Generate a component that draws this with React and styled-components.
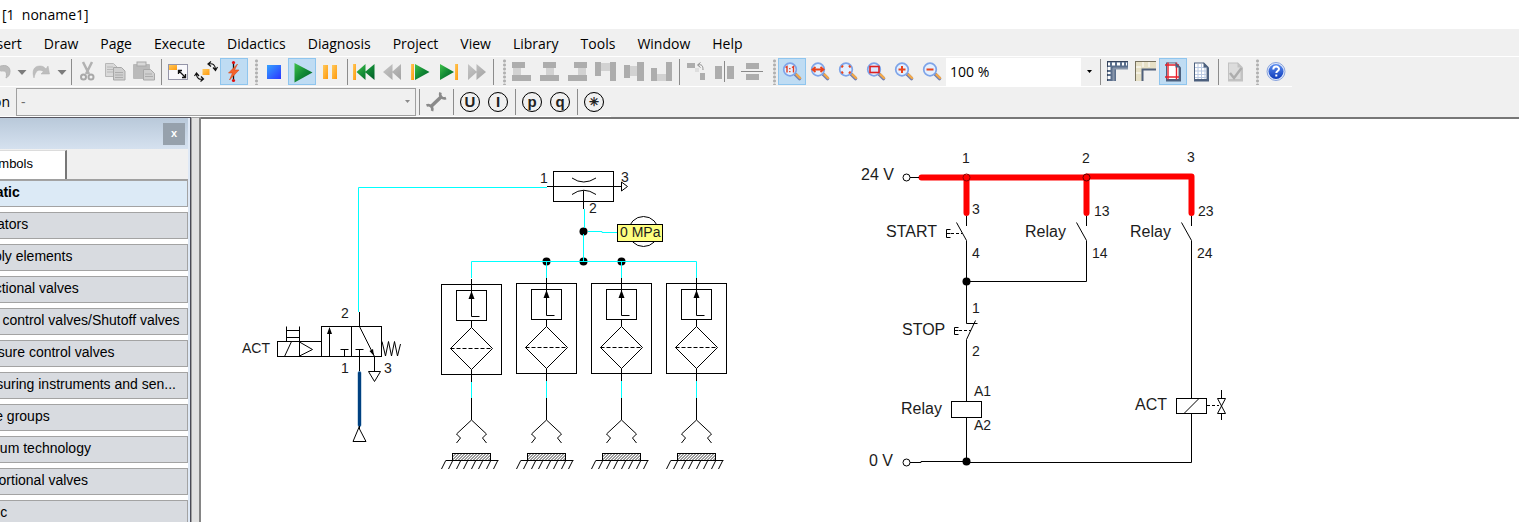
import React from "react";
import styled, { createGlobalStyle } from "styled-components";

const UI = '"Open Sans", "Noto Sans", sans-serif';
const SANS = '"Liberation Sans", Arial, sans-serif';

const GlobalStyle = createGlobalStyle`
  * { box-sizing: border-box; }
  body { margin: 0; background: #fff; font-family: ${UI}; font-size: 14px; color: #000; }
  button, select { font: inherit; color: inherit; }
`;

const Window = styled.div`
  display: flex;
  flex-direction: column;
  height: 100vh;
  overflow: hidden;
  background: #f0f0f0;
`;

const TitleBar = styled.header`
  flex: none;
  height: 29px;
  padding-left: 2px;
  line-height: 29px;
  background: #fff;
  white-space: pre;
`;

const MenuBar = styled.nav`
  flex: none;
  display: flex;
  gap: 22px;
  height: 28px;
  margin-left: -16px;
  border-bottom: 1px solid #fff;
`;

const MenuItem = styled.button`
  padding: 2px 0 0;
  border: 0;
  background: none;
  line-height: 26px;
  white-space: nowrap;
`;

const Toolbar = styled.div`
  flex: none;
  display: flex;
  align-items: center;
  align-self: flex-start;
  height: 30px;
  padding-right: 3px;
  border-bottom: 1px solid #fff;
`;

const ToolButton = styled.button`
  flex: none;
  display: grid;
  place-items: center;
  width: ${(p) => p.$w || 28}px;
  height: 27px;
  padding: 0;
  border: 0;
  overflow: hidden;
  background: ${(p) => (p.$on ? "#bfdcf3" : "none")};
  box-shadow: ${(p) => (p.$on ? "inset 0 0 0 1px #8fc5ee" : "none")};
`;

const Separator = styled.div`
  flex: none;
  width: 6px;
  height: 26px;
  border-left: 3px solid transparent;
  background: linear-gradient(#8c8c8c, #8c8c8c) 0 0 / 1px 100% no-repeat;
`;

const Grip = styled.div`
  flex: none;
  width: 12px;
  height: 26px;
  background: radial-gradient(circle, #b0b0b0 1px, transparent 2px) 7px 0 / 3px 4px repeat-y;
`;

const Combo = styled.div`
  position: relative;
  width: ${(p) => p.$w}px;
  height: ${(p) => p.$h}px;
  border: ${(p) => (p.$flat ? "1px solid #a0a0a0" : "0")};
  background: ${(p) => (p.$flat ? "#f0f0f0" : "#fff")};
`;

const ComboSelect = styled.select`
  width: 100%;
  height: 100%;
  padding: 0 20px 0 4px;
  border: 0;
  outline: 0;
  appearance: none;
  background: none;
  opacity: 1;
  color: ${(p) => (p.disabled ? "#6d6d6d" : "#000")};
`;

const ComboCaret = styled.span`
  position: absolute;
  top: 0;
  right: 0;
  display: grid;
  place-items: center;
  width: 16px;
  height: 100%;
  background: #f0f0f0;
  pointer-events: none;
`;

const FieldLabel = styled.label`
  display: flex;
  justify-content: flex-end;
  width: 16px;
  padding-right: 6px;
  overflow: hidden;
`;

const CircleLetter = styled.span`
  display: grid;
  place-items: center;
  width: 20px;
  height: 20px;
  border: 1px solid #000;
  border-radius: 50%;
  outline: 1px solid rgba(0, 0, 0, 0.1);
  outline-offset: -1px;
  color: #222;
  font: bold ${(p) => (p.$small ? 12 : 15)}px/16px ${SANS};
`;

const Workspace = styled.main`
  flex: 1;
  display: flex;
  min-height: 0;
`;

const Sidebar = styled.aside`
  flex: none;
  display: flex;
  flex-direction: column;
  width: 251px;
  margin-left: -60px;
  border-top: 1px solid #55555f;
  border-right: 1px solid #4a4a55;
  padding-right: 2px;
  background: #dfe9f6;
  font-family: ${SANS};
`;

const SidebarHead = styled.div`
  flex: none;
  display: flex;
  justify-content: flex-end;
  align-items: center;
  height: 31px;
  padding-right: 3px;
  background: linear-gradient(#b9c9da, #d5e1ef);
`;

const CloseButton = styled.button`
  width: 22px;
  height: 22px;
  padding: 0 0 2px;
  border: 0;
  background: #96a1ac;
  color: #fff;
  font: bold 11px/16px ${SANS};
`;

const Tabs = styled.div`
  flex: none;
  display: flex;
  height: 31px;
  padding-top: 1px;
  background: #f0f0f0;
  border-bottom: 1px solid #a0a0a0;
`;

const Tab = styled.button`
  width: 127px;
  padding: 0 32px 4px 0;
  border: 0;
  border-top: 1px solid #dcdcdc;
  border-right: 2px solid #777;
  background: #fff;
  text-align: right;
  font-size: 13px;
`;

const Groups = styled.div`
  flex: 1;
  display: flex;
  flex-direction: column;
  gap: 5px;
  min-height: 0;
  overflow: hidden;
  background: #fff;
`;

const Group = styled.button`
  flex: none;
  height: 27px;
  padding: 0 0 3px ${(p) => (p.$top ? 8 : 28)}px;
  border: 1px solid #a3a3a3;
  background: ${(p) => (p.$open ? "#dceaf6" : "#d8dbe0")};
  font-weight: ${(p) => (p.$open ? "bold" : "normal")};
  text-align: left;
  white-space: nowrap;
`;

const Splitter = styled.div`
  flex: none;
  width: 10px;
  border-top: 1px solid #a0a0a0;
  border-left: 1px solid #a0a0a0;
  border-right: 2px solid #858585;
  background: #e1e1e1;
`;

const Canvas = styled.section`
  flex: 1;
  min-width: 0;
  overflow: hidden;
  border-top: 2px solid #777;
  background: #fff;
`;

const Diagram = styled.svg`
  display: block;
  text { font-family: ${SANS}; font-size: 14px; fill: #1c1c1c; }
  text.name { font-size: 16px; }
  .w { fill: none; stroke: #000; stroke-width: 1; }
  .air { fill: none; stroke: #00ffff; stroke-width: 1; }
  .hot { fill: none; stroke: #ff0000; stroke-width: 6; stroke-linecap: round; stroke-linejoin: round; }
`;

/* ---------- toolbar icons, each drawn in a 28 x 27 cell ---------- */

const Icon = ({ children, w = 28, vb }) => (
  <svg width={w} height="27" viewBox={vb || `0 0 ${w} 27`} aria-hidden="true">
    {children}
  </svg>
);

const HiddenDefs = styled.svg`
  display: block;
`;

const Defs = () => (
  <HiddenDefs width="0" height="0" aria-hidden="true">
    <defs>
      <linearGradient id="green" x1="0" y1="0" x2="1" y2="1">
        <stop offset="0" stopColor="#3fc24a" />
        <stop offset="0.5" stopColor="#128a35" />
        <stop offset="1" stopColor="#005c28" />
      </linearGradient>
      <linearGradient id="blue" x1="0" y1="0" x2="1" y2="1">
        <stop offset="0" stopColor="#35a2ff" />
        <stop offset="1" stopColor="#2a35ff" />
      </linearGradient>
      <linearGradient id="amber" x1="0" y1="0" x2="1" y2="1">
        <stop offset="0" stopColor="#ffc95c" />
        <stop offset="1" stopColor="#ff9a0d" />
      </linearGradient>
      <linearGradient id="grey" x1="0" y1="0" x2="1" y2="1">
        <stop offset="0" stopColor="#c6c6c6" />
        <stop offset="1" stopColor="#a2a2a2" />
      </linearGradient>
      <linearGradient id="help" x1="0" y1="0" x2="0" y2="1">
        <stop offset="0" stopColor="#5c8df0" />
        <stop offset="1" stopColor="#0d3bbb" />
      </linearGradient>
      <pattern id="hatch" width="3" height="3" patternUnits="userSpaceOnUse">
        <path d="M-1 1L1 -1M0 3L3 0M2 4L4 2" stroke="#222" strokeWidth="0.9" />
      </pattern>
    </defs>
  </HiddenDefs>
);

const D = "#adadad";
const L = "#d2d2d2";
const Bars = ({ r }) => (
  <Icon>
    {r.map(([x, y, w, h, light], i) => (
      <rect key={i} x={x} y={y} width={w} height={h} fill={light ? L : D} />
    ))}
  </Icon>
);

const DropCaret = () => (
  <Icon w={12}>
    <path d="M1.500 12h9l-4.500 5z" fill="#7b7b7b" />
  </Icon>
);

const Lens = ({ children }) => (
  <Icon>
    <path d="M16 15l2.500 2.500" stroke="#6a7bb8" strokeWidth="3" />
    <path d="M17.500 16.500l4 4" stroke="#7580ae" strokeWidth="3.600" strokeLinecap="round" />
    <path d="M18.500 16.500l3.500 3.500" stroke="#f3a94a" strokeWidth="2.400" strokeLinecap="round" />
    <circle cx="12" cy="11.500" r="6.300" fill="#e4f0ff" stroke="#7ea4e8" strokeWidth="1.700" />
    {children}
  </Icon>
);

const Sheet = ({ fill, fold, children }) => (
  <Icon>
    <path d="M7 4.500h10l5 5v14h-15z" fill={fold} />
    <path d="M8 5.500h8.500l3 4v11.500h-11.500z" fill={fill} />
    {children}
    <path d="M16.500 4.500v5h5z" fill={fold} />
  </Icon>
);

const icons = {
  undo: (
    <Icon w={16} vb="0 0 16 27">
      <path d="M-3 11c3-5 13-5 13 2c0 4-2 6-4 7c1-4 1-8-5-7z" fill="#bcbcbc" stroke="#b4b4b4" />
    </Icon>
  ),
  redo: (
    <Icon>
      <path d="M6 20c-2-6-1-12 6-12c3 0 4 1 6 3l2-3l1.500 8h-8.500l2.500-2.500c-5-3-8-1-9.500 6.500z" fill="#bdbdbd" stroke="#b0b0b0" strokeWidth="0.500" />
    </Icon>
  ),
  cut: (
    <Icon>
      <path d="M9 4l6 12M18 4l-6 12" stroke="#b2b2b2" strokeWidth="2.500" fill="none" />
      <circle cx="9.500" cy="19" r="2.500" fill="none" stroke="#a8a8a8" strokeWidth="2" />
      <circle cx="17" cy="19" r="2.500" fill="none" stroke="#a8a8a8" strokeWidth="2" />
    </Icon>
  ),
  copy: (
    <Icon>
      <path d="M3.500 5.500h8l3.500 3.500v9.500h-11.500z" fill="#d9d9d9" stroke="#b8b8b8" />
      <path d="M5 9h6M5 11.500h6M5 14h6" stroke="#b8b8b8" />
      <path d="M11.500 9.500h8l3.500 3.500v9h-11.500z" fill="#cfcfcf" stroke="#a8a8a8" />
      <path d="M13 14.500h8M13 17h8M13 19.500h8" stroke="#acacac" />
    </Icon>
  ),
  paste: (
    <Icon>
      <rect x="3" y="6" width="17" height="15" rx="1" fill="#bababa" />
      <rect x="7" y="4" width="9" height="4" fill="#d8d8d8" stroke="#a8a8a8" />
      <path d="M13.500 11.500h7l4 4v6.500h-11z" fill="#cfcfcf" stroke="#a8a8a8" />
      <path d="M15 16h7M15 18.500h8" stroke="#acacac" />
    </Icon>
  ),
  fit: (
    <Icon>
      <rect x="4.500" y="6.500" width="19" height="15" fill="#f8f8fb" stroke="#9495a8" />
      <rect x="5" y="7" width="8" height="5" fill="url(#amber)" />
      <path d="M14.500 12.500l6.500 6.500M14.500 16v-3.500h3.500M21.500 16v3.500h-3.500" fill="none" stroke="#111" strokeWidth="1.300" />
    </Icon>
  ),
  turn: (
    <Icon>
      <rect x="10.500" y="11" width="7" height="6" fill="url(#amber)" />
      <path d="M17 6c4-1 6 1 6.500 5M19 3.500l-3 2.500l3 2.500M21 9.500l2.500 3l2-3.500" fill="none" stroke="#111" strokeWidth="1.200" />
      <path d="M11 21c-4 1-6-1-6.500-4M9 18.500l2.500 2.500l-3 2.500M2.500 18l2-3l2.500 3" fill="none" stroke="#111" strokeWidth="1.200" />
    </Icon>
  ),
  bolt: (
    <Icon>
      <path d="M13.500 4v19" stroke="#111" strokeWidth="1.300" />
      <path d="M17.500 6l-9 9h4l-3 7l9.500-10h-4.500z" fill="#f4622a" stroke="#d8481d" strokeWidth="0.600" />
      <circle cx="13.500" cy="4.500" r="1.600" fill="#e01010" />
      <circle cx="13.500" cy="22.500" r="1.600" fill="#e01010" />
    </Icon>
  ),
  stop: (
    <Icon>
      <rect x="7" y="7" width="14" height="14" fill="url(#blue)" />
    </Icon>
  ),
  play: (
    <Icon>
      <path d="M6.500 5l18 9.500l-18 10z" fill="url(#green)" />
    </Icon>
  ),
  pause: (
    <Icon>
      <rect x="7" y="7" width="5" height="14" fill="url(#amber)" />
      <rect x="16" y="7" width="5" height="14" fill="url(#amber)" />
    </Icon>
  ),
  first: (
    <Icon>
      <rect x="3" y="6" width="3" height="16" fill="url(#amber)" />
      <path d="M15.500 6v16l-9-8zM24.500 6v16l-9.500-8z" fill="url(#green)" />
    </Icon>
  ),
  back: (
    <Icon>
      <path d="M14.500 6v16l-9.500-8zM23 6v16l-9-8z" fill="url(#grey)" />
    </Icon>
  ),
  step: (
    <Icon>
      <rect x="5" y="6" width="3" height="16" fill="url(#amber)" />
      <path d="M9 6l14.500 8l-14.500 8z" fill="url(#green)" />
    </Icon>
  ),
  next: (
    <Icon>
      <path d="M6 6l14 8l-14 8z" fill="url(#green)" />
      <rect x="21" y="6" width="3" height="16" fill="url(#amber)" />
    </Icon>
  ),
  ahead: (
    <Icon>
      <path d="M6 6l9 8l-9 8zM14.500 6l9.500 8l-9.500 8z" fill="url(#grey)" />
    </Icon>
  ),
  alignL: <Bars r={[[4, 4, 13, 6], [5, 10, 8, 7, 1], [4, 17, 19, 6]]} />,
  alignC: <Bars r={[[7, 4, 13, 6], [10, 10, 8, 7, 1], [4, 17, 19, 6]]} />,
  alignR: <Bars r={[[10, 4, 13, 6], [14, 10, 8, 7, 1], [4, 17, 19, 6]]} />,
  alignT: <Bars r={[[3, 4, 6, 14], [9, 5, 9, 8, 1], [18, 4, 6, 19]]} />,
  alignM: <Bars r={[[4, 7, 6, 13], [10, 8, 7, 10, 1], [17, 4, 7, 19]]} />,
  alignB: <Bars r={[[3, 10, 6, 13], [9, 16, 9, 7, 1], [18, 4, 6, 19]]} />,
  rotate: (
    <Icon>
      <rect x="5" y="5" width="8" height="5" fill={D} />
      <rect x="18" y="15" width="5" height="7" fill={D} />
      <rect x="13" y="10" width="4" height="4" fill="#dedede" />
      <path d="M16 7c4-1 5 1 5 5M18.500 4.500l-3 2.500l3 2.500" fill="none" stroke="#8e8e8e" />
    </Icon>
  ),
  mirrorH: (
    <Icon>
      <rect x="5" y="8" width="7" height="13" fill={D} />
      <rect x="17" y="8" width="7" height="13" fill={D} />
      <path d="M14.500 3v21" stroke="#8a8a8a" />
    </Icon>
  ),
  mirrorV: (
    <Icon>
      <rect x="8" y="5" width="13" height="6" fill={D} />
      <rect x="8" y="16" width="13" height="6" fill={D} />
      <path d="M3 13.500h22" stroke="#8a8a8a" />
    </Icon>
  ),
  zoomOne: (
    <Lens>
      <path d="M7.500 9.500l1.500-1v6M14 9.500l1.500-1v6M11.800 10v1.200M11.800 13v1.200" fill="none" stroke="#e03c22" strokeWidth="1.400" />
    </Lens>
  ),
  zoomWidth: (
    <Lens>
      <path d="M7 11.500h10M9.500 9l-3 2.500l3 2.500M14.500 9l3 2.500l-3 2.500" fill="none" stroke="#e8421c" strokeWidth="1.800" />
    </Lens>
  ),
  zoomAll: (
    <Lens>
      <path d="M9 7.500l-1.500 2M15 7.500l1.500 2M9 15.500l-1.500-2M15 15.500l1.500-2" stroke="#e8421c" strokeWidth="2" fill="none" />
    </Lens>
  ),
  zoomBox: (
    <Lens>
      <rect x="8" y="8.500" width="9" height="6" fill="#d9e6ff" stroke="#dd2020" strokeWidth="1.600" />
    </Lens>
  ),
  zoomIn: (
    <Lens>
      <path d="M8.500 11.500h7M12 8v7" stroke="#e8421c" strokeWidth="2" />
    </Lens>
  ),
  zoomOut: (
    <Lens>
      <path d="M8.500 11.500h7" stroke="#e8421c" strokeWidth="2" />
    </Lens>
  ),
  ruler: (
    <Icon>
      <path d="M4 3h21v8h-12v12h-9z" fill="#5b6f8c" />
      <path d="M4 3.500h21M4.500 3v20" stroke="#34435c" />
      <path d="M5 6h2M9 6h3M14 6h3M19 6h2M23 6h1M6 9v3M6 14v2M6 18v3" stroke="#fff" strokeWidth="3" />
      <path d="M10 10.500h15M10.500 10v13" stroke="#8795aa" strokeWidth="2" />
    </Icon>
  ),
  frame: (
    <Icon>
      <path d="M4 3h21v8h-14v12h-7z" fill="#e6e0c6" />
      <path d="M4 3.500h21M4.500 3v20" stroke="#77725f" />
      <path d="M12 4v5M18 4v5M5 9h5M5 15h5" stroke="#fff" />
      <path d="M11.500 23v-11.500h13.500" fill="none" stroke="#51617b" strokeWidth="2" />
    </Icon>
  ),
  page: (
    <Sheet fill="#fff" fold="#4c607e">
      <path d="M9 4.500v17M17.500 4.500v17M6 7h14M6 19h14" stroke="#e8202c" strokeWidth="1.400" />
    </Sheet>
  ),
  grid: (
    <Sheet fill="#fff" fold="#4c607e">
      <path d="M11 6v15M14.500 6v15M18 9v12M8 9.500h11M8 13h11M8 16.500h11M8 19.500h11" stroke="#b9c9e2" />
    </Sheet>
  ),
  check: (
    <Sheet fill="#dcdcdc" fold="#c2c2c2">
      <path d="M9 15l4 5l7.500-10" fill="none" stroke="#adadad" strokeWidth="2.500" />
    </Sheet>
  ),
  wrench: (
    <Icon>
      <path d="M9 18.500l10-9.500" stroke="#8a8a8a" strokeWidth="3.500" />
      <path d="M18.500 4.500a4.200 4.200 0 0 0 5.500 5.500M10 23a4.200 4.200 0 0 0 -5.500 -5.500" fill="none" stroke="#8a8a8a" strokeWidth="2.600" />
    </Icon>
  ),
};

const tools = [
  ["undo", "Undo", 16], ["drop", "Undo list", 12], ["redo", "Redo"], ["drop", "Redo list", 12], "|",
  ["cut", "Cut"], ["copy", "Copy"], ["paste", "Paste"], "|",
  ["fit", "Fit"], ["turn", "Turn"], ["bolt", "Connect", 28, true], ":",
  ["stop", "Stop"], ["play", "Start", 28, true], ["pause", "Pause"], "|",
  ["first", "Reset"], ["back", "Back"], ["step", "Single step"], ["next", "Next change"], ["ahead", "Next topic"], "|", ":",
  ["alignL", "Align left"], ["alignC", "Align centre"], ["alignR", "Align right"],
  ["alignT", "Align top"], ["alignM", "Align middle"], ["alignB", "Align bottom"], "|",
  ["rotate", "Rotate"], ["mirrorH", "Mirror horizontally"], ["mirrorV", "Mirror vertically"], ":",
  ["zoomOne", "Actual size", 28, true], ["zoomWidth", "Fit width"], ["zoomAll", "Fit all"],
  ["zoomBox", "Zoom area"], ["zoomIn", "Zoom in"], ["zoomOut", "Zoom out"], "zoom", "|",
  ["ruler", "Rulers"], ["frame", "Frame"], ["page", "Page border", 28, true], ["grid", "Grid"], "|",
  ["check", "Check"], ":", ["help", "Help"],
];

const HelpIcon = () => (
  <Icon>
    <circle cx="15" cy="13.500" r="9" fill="#dfe8fa" stroke="#8aa4dd" />
    <circle cx="15" cy="13.500" r="7.500" fill="url(#help)" />
    <path d="M12.300 11.500c0-4 5.700-3.600 5.700-0.500c0 2-2.700 2-2.700 4M15.300 16.500v2" fill="none" stroke="#fff" strokeWidth="2" />
  </Icon>
);

const CaretGlyph = ({ color }) => (
  <svg width="7" height="4" viewBox="0 0 7 4" aria-hidden="true">
    <path d="M1 0h5l-2.500 3z" fill={color} />
  </svg>
);

const groups = [
  ["Pneumatic", true, true],
  ["Actuators"],
  ["Supply elements"],
  ["Directional valves"],
  ["Flow control valves/Shutoff valves"],
  ["Pressure control valves"],
  ["Measuring instruments and sen..."],
  ["Valve groups"],
  ["Vacuum technology"],
  ["Proportional valves"],
  ["Hydraulic", true, false],
];

const menus = ["Insert", "Draw", "Page", "Execute", "Didactics", "Diagnosis", "Project", "View", "Library", "Tools", "Window", "Help"];

/* ---------- circuit diagram ---------- */

const Dot = ({ x, y }) => <circle cx={x} cy={y} r="4" fill="#000" />;

const SuctionUnit = ({ x, dy = 0 }) => (
  <g transform={`translate(${x} 0)`}>
    <path className="air" d="M0 261.500V278M0 381V398" />
    <g transform={`translate(0 ${dy})`}>
      <rect className="w" x="-30" y="283.500" width="60" height="90" />
      <rect className="w" x="-15" y="289.500" width="30" height="30" />
      <path className="w" d="M0 278V315.500H8M0 319.500V326.500M0 368.500V381" />
      <path d="M0 290l3 8h-6z" />
      <path className="w" d="M0 326.500l21 21l-21 21l-21 -21z" />
      <path className="w" d="M-21 347.500H21" strokeDasharray="4 2" />
    </g>
    <path className="w" d="M0 398V420l-15 14l4 4l-4 5M0 420l15 14l-4 4l4 5" />
    <rect x="-19" y="453.500" width="38" height="7" fill="url(#hatch)" stroke="#000" />
    <path className="w" d="M-26 460.500H27" />
    <path className="w" d="M-26 461l-4 8M-19 461l-4 8M-11 461l-4 8M-4 461l-4 8M4 461l-4 8M11 461l-4 8M19 461l-4 8M26 461l-4 8" />
  </g>
);

const Circuit = () => (
  <Diagram width="1100" height="380" viewBox="201 119 1100 380" role="img" aria-label="Circuit diagram">
    {/* 3/2 way valve */}
    <path className="air" d="M547 187.500H358.500V312" />
    <path className="w" d="M359.500 312V326.500" />
    <rect className="w" x="321.500" y="326.500" width="60" height="30" />
    <path className="w" d="M351.500 326.500V356.500" />
    <rect className="w" x="277.500" y="341.500" width="44" height="15" />
    <path className="w" d="M299.500 326.500V356.500M286.500 326.500V341.500M286.500 330.500H299.500M286.500 337.500H299.500M284.500 356.500L291.500 341.500M299.500 342L312.500 349.500L299.500 356" />
    <path className="w" d="M329.500 356.500V328M340.500 349.500H348.500M344.500 349.500V356.500M355.500 349.500H363.500M359.500 349.500V372M359.500 326.500L374.500 356.500V371.500" />
    <path d="M329.500 327l2.500 7h-5zM374 356l-4.500 -5l3.500 -2z" />
    <path className="w" d="M368.500 371.500H380.500L374.500 381.500z" />
    <path className="w" d="M382 341.500L385.500 356L388.500 341.500L391.500 356L394.500 341.500L397.500 356L400.500 344" />
    <path d="M359.500 373V425" stroke="#8fb4d2" strokeWidth="4" strokeLinecap="round" />
    <path d="M359.500 373V425" stroke="#004080" strokeWidth="3" strokeLinecap="round" />
    <path className="w" d="M359.500 426V429L366 441.500H353z" />
    <text x="242" y="353">ACT</text>
    <text x="341" y="318">2</text>
    <text x="341" y="373">1</text>
    <text x="384" y="373">3</text>

    {/* vacuum generator */}
    <rect className="w" x="553.500" y="171.500" width="60" height="30" />
    <path className="w" d="M547 186.500H621.500M621.500 182L627.500 186.500L621.500 191zM583.500 190.500V209" />
    <path className="w" d="M572 178Q583.500 186 596 178M572 194.500Q583.500 186 596 194.500" />
    <text x="540" y="183">1</text>
    <text x="621" y="182">3</text>
    <text x="589" y="213">2</text>

    {/* pressure gauge */}
    <circle className="w" cx="643.500" cy="231.500" r="15" />
    <rect x="617.500" y="224.500" width="45" height="17" fill="#ffff80" stroke="#000" />
    <text x="620" y="237">0 MPa</text>

    <Dot x={583.5} y={231.5} />
    <Dot x={546.5} y={261.5} />
    <Dot x={583.5} y={261.5} />
    <Dot x={621.5} y={261.5} />
    <path className="air" d="M584.500 209V228M583.500 234V261.500M588 231.500H602V232.500H617M471.500 261.500H696.500" />
    <SuctionUnit x={471.5} dy={1} />
    <SuctionUnit x={546.5} />
    <SuctionUnit x={621.5} />
    <SuctionUnit x={696.5} />

    {/* electrical part */}
    <path className="hot" d="M921.500 177.500H1086.500V213M966.500 177.500V213M1087 176.500H1191.500V213" />
    <circle cx="966.500" cy="177.500" r="3.500" fill="none" stroke="#8c0000" />
    <circle cx="1086.500" cy="177.500" r="3.500" fill="none" stroke="#600000" />
    <circle className="w" cx="906.500" cy="177.500" r="3.500" />
    <path className="w" d="M910 177.500H919M966.500 216V226M1086.500 216V226M1191.500 216V226" />
    <path className="w" d="M956.500 222.500L966.500 240.500V323.500H977.500M1076.500 222.500L1086.500 240.500V281.500H966.500M1181.500 222.500L1191.500 240.500V398.500" />
    <path className="w" d="M950.500 229.500H946.500V237.500H950.500M946.500 233.500H950.500M958.500 327.500H954.500V334.500H958.500M954.500 330.500H958.500" />
    <path className="w" d="M951 233.500H962M959 330.500H971" strokeDasharray="3 2" />
    <path className="w" d="M975.500 320.500L966.500 339.500V401.500M966.500 417.500V461.500" />
    <rect className="w" x="951.500" y="401.500" width="30" height="16" />
    <circle className="w" cx="906.500" cy="462.500" r="3.500" />
    <path className="w" d="M910 462.500H921V461.500H966.500M966.500 462.500H1191.500V413.500" />
    <Dot x={966.5} y={281.5} />
    <Dot x={966.5} y={461.5} />
    <rect className="w" x="1176.500" y="398.500" width="30" height="15" />
    <path className="w" d="M1184 413.500L1199 398.500" />
    <path className="w" d="M1207 405.500H1219" strokeDasharray="3 2" />
    <path className="w" d="M1221.500 390V398.500M1217.500 398.500H1225.500L1217.500 413.500H1225.500zM1221.500 413.500V420" />

    <text x="962" y="163">1</text>
    <text x="1082" y="163">2</text>
    <text x="1187" y="162">3</text>
    <text className="name" x="861" y="180">24 V</text>
    <text className="name" x="886" y="237">START</text>
    <text className="name" x="1025" y="237">Relay</text>
    <text className="name" x="1130" y="237">Relay</text>
    <text className="name" x="902" y="335">STOP</text>
    <text className="name" x="901" y="414">Relay</text>
    <text className="name" x="1135" y="410">ACT</text>
    <text className="name" x="869" y="466">0 V</text>
    <text x="972" y="214">3</text>
    <text x="972" y="258">4</text>
    <text x="1094" y="216">13</text>
    <text x="1092" y="258">14</text>
    <text x="1198" y="216">23</text>
    <text x="1197" y="258">24</text>
    <text x="972" y="313">1</text>
    <text x="972" y="356">2</text>
    <text x="974" y="396">A1</text>
    <text x="974" y="430">A2</text>
  </Diagram>
);

export default function App() {
  return (
    <>
      <GlobalStyle />
      <Window>
        <Defs />
        <TitleBar>{"[1  noname1]"}</TitleBar>
        <MenuBar>
          {menus.map((m) => (
            <MenuItem key={m}>{m}</MenuItem>
          ))}
        </MenuBar>
        <Toolbar>
          {tools.map((t, i) => {
            if (t === "|") return <Separator key={i} />;
            if (t === ":") return <Grip key={i} />;
            if (t === "zoom")
              return (
                <Combo key={i} $w={151} $h={28}>
                  <ComboSelect aria-label="Zoom" defaultValue="100 %">
                    <option>100 %</option>
                  </ComboSelect>
                  <ComboCaret>
                    <CaretGlyph color="#000" />
                  </ComboCaret>
                </Combo>
              );
            const [name, label, w, on] = t;
            return (
              <ToolButton key={i} aria-label={label} $w={w} $on={on}>
                {name === "drop" ? <DropCaret /> : name === "help" ? <HelpIcon /> : icons[name]}
              </ToolButton>
            );
          })}
        </Toolbar>
        <Toolbar>
          <FieldLabel htmlFor="selection">on</FieldLabel>
          <Combo $w={400} $h={28} $flat>
            <ComboSelect id="selection" disabled defaultValue="-">
              <option>-</option>
            </ComboSelect>
            <ComboCaret>
              <CaretGlyph color="#8a8a8a" />
            </ComboCaret>
          </Combo>
          <Separator />
          <ToolButton aria-label="Settings">{icons.wrench}</ToolButton>
          <Separator />
          <ToolButton><CircleLetter>U</CircleLetter></ToolButton>
          <ToolButton><CircleLetter>I</CircleLetter></ToolButton>
          <Separator />
          <ToolButton><CircleLetter>p</CircleLetter></ToolButton>
          <ToolButton><CircleLetter>q</CircleLetter></ToolButton>
          <Separator />
          <ToolButton><CircleLetter $small>✳</CircleLetter></ToolButton>
        </Toolbar>
        <Workspace>
          <Sidebar>
            <SidebarHead>
              <CloseButton aria-label="Close">x</CloseButton>
            </SidebarHead>
            <Tabs>
              <Tab>Symbols</Tab>
            </Tabs>
            <Groups>
              {groups.map(([label, top, open]) => (
                <Group key={label} $top={top} $open={open}>
                  {label}
                </Group>
              ))}
            </Groups>
          </Sidebar>
          <Splitter />
          <Canvas>
            <Circuit />
          </Canvas>
        </Workspace>
      </Window>
    </>
  );
}
